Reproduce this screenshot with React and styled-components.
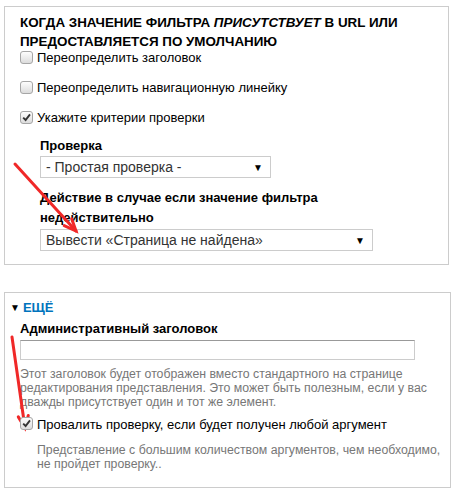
import React from 'react'
import styled, { createGlobalStyle } from 'styled-components'

const GlobalStyle = createGlobalStyle`
  body {
    margin: 0;
    background: #fff;
    font-family: 'Liberation Sans', Arial, sans-serif;
    color: #000;
  }
`

const Page = styled.div`
  position: relative;
  width: 457px;
  height: 498px;
  padding: 6px 0 0 4px;
  box-sizing: border-box;
`

const Panel = styled.fieldset`
  margin: 0 0 ${p => p.$gap || 0}px;
  width: ${p => p.$width}px;
  box-sizing: border-box;
  border: 1px solid #ccc;
  padding: ${p => p.$pad};
  min-width: 0;
`

const Heading = styled.h2`
  margin: 0;
  font-size: 13.4px;
  line-height: 19px;
  font-weight: bold;
  text-transform: uppercase;
  em {
    font-style: italic;
  }
`

const Options = styled.div`
  display: flex;
  flex-direction: column;
  gap: 16px;
  margin-top: -1px;
`

const CheckRow = styled.label`
  display: flex;
  align-items: center;
  gap: 4px;
  height: ${p => p.$height || 14}px;
  font-size: 13px;
  margin-top: ${p => p.$top || 0}px;
`

const Box = styled.span`
  position: relative;
  z-index: 2;
  flex: none;
  width: 11px;
  height: 11px;
  border: 1px solid #a6a6a6;
  border-radius: 3px;
  background: linear-gradient(#fdfdfd, #dcdcdc);
  margin-top: ${p => p.$shift || 0}px;
`

const Tick = styled.svg`
  position: absolute;
  left: 1px;
  top: 1px;
`

const Nested = styled.div`
  margin: 13px 0 0 20px;
`

const FieldLabel = styled.div`
  font-size: 13px;
  font-weight: bold;
  line-height: ${p => p.$lh || 18}px;
  margin-top: ${p => p.$top || 0}px;
`

const Select = styled.div`
  display: flex;
  align-items: center;
  justify-content: space-between;
  width: ${p => p.$width}px;
  height: 22px;
  box-sizing: border-box;
  border: 1px solid #ccc;
  padding: 0 7px 0 5px;
  font-size: 14px;
  color: #333;
  margin-top: 1px;
`

const Caret = styled.span`
  font-size: 10px;
  color: #000;
`

const Toggle = styled.div`
  display: flex;
  align-items: center;
  gap: 3px;
  margin-left: -10px;
  line-height: 18px;
  font-size: 13px;
  font-weight: bold;
  color: #0074bd;
`

const ToggleCaret = styled.span`
  font-size: 10px;
  color: #000;
`

const TextInput = styled.div`
  width: 395px;
  height: 20px;
  box-sizing: border-box;
  border: 1px solid #ccc;
  border-top-color: #999;
  margin-top: 2px;
`

const Description = styled.div`
  font-size: 12.3px;
  line-height: 14px;
  color: #777;
  white-space: nowrap;
  margin: ${p => p.$margin};
`

const Arrows = styled.svg`
  position: absolute;
  z-index: 1;
  left: 0;
  top: 0;
  pointer-events: none;
`

function Checkbox({ checked, shift }) {
  return (
    <Box $shift={shift}>
      {checked && (
        <Tick width="9" height="9" viewBox="0 0 9 9">
          <path d="M1.2 4.6 L3.6 7 L8 1.4" fill="none" stroke="#333" strokeWidth="1.9" />
        </Tick>
      )}
    </Box>
  )
}

function Arrow({ x1, y1, x2, y2 }) {
  const angle = Math.atan2(y2 - y1, x2 - x1)
  const len = 13
  const spread = 0.4
  const a = [x2 - len * Math.cos(angle - spread), y2 - len * Math.sin(angle - spread)]
  const b = [x2 - len * Math.cos(angle + spread), y2 - len * Math.sin(angle + spread)]
  return (
    <g stroke="#f02828" strokeWidth="3" strokeLinecap="round" fill="none">
      <line x1={x1} y1={y1} x2={x2} y2={y2} />
      <polyline points={`${a[0]},${a[1]} ${x2},${y2} ${b[0]},${b[1]}`} />
    </g>
  )
}

export default function App() {
  return (
    <Page>
      <GlobalStyle />
      <Panel $width={445} $pad="6px 15px 13px" $gap={27}>
        <Heading>
          Когда значение фильтра <em>присутствует</em> в URL или предоставляется по умолчанию
        </Heading>
        <Options>
          <CheckRow>
            <Checkbox />
            Переопределить заголовок
          </CheckRow>
          <CheckRow>
            <Checkbox />
            Переопределить навигационную линейку
          </CheckRow>
          <CheckRow>
            <Checkbox checked />
            Укажите критерии проверки
          </CheckRow>
        </Options>
        <Nested>
          <FieldLabel>Проверка</FieldLabel>
          <Select $width={231}>
            - Простая проверка -
            <Caret>▼</Caret>
          </Select>
          <FieldLabel $lh={20} $top={10}>
            Действие в случае если значение фильтра недействительно
          </FieldLabel>
          <Select $width={333}>
            Вывести «Страница не найдена»
            <Caret>▼</Caret>
          </Select>
        </Nested>
      </Panel>

      <Panel $width={447} $pad="6px 15px 16px">
        <Toggle>
          <ToggleCaret>▼</ToggleCaret>
          ЕЩЁ
        </Toggle>
        <FieldLabel $top={3}>Административный заголовок</FieldLabel>
        <TextInput />
        <Description $margin="7px 0 0">
          Этот заголовок будет отображен вместо стандартного на странице
          <br />
          редактирования представления. Это может быть полезным, если у вас
          <br />
          дважды присутствует один и тот же элемент.
        </Description>
        <CheckRow $top={7} $height={16}>
          <Checkbox checked shift={-2} />
          Провалить проверку, если будет получен любой аргумент
        </CheckRow>
        <Description $margin="11px 0 0 17px">
          Представление с большим количеством аргументов, чем необходимо,
          <br />
          не пройдет проверку..
        </Description>
      </Panel>

      <Arrows width="457" height="498">
        <Arrow x1={15} y1={164} x2={76} y2={231} />
        <Arrow x1={12} y1={337} x2={25} y2={428} />
      </Arrows>
    </Page>
  )
}
